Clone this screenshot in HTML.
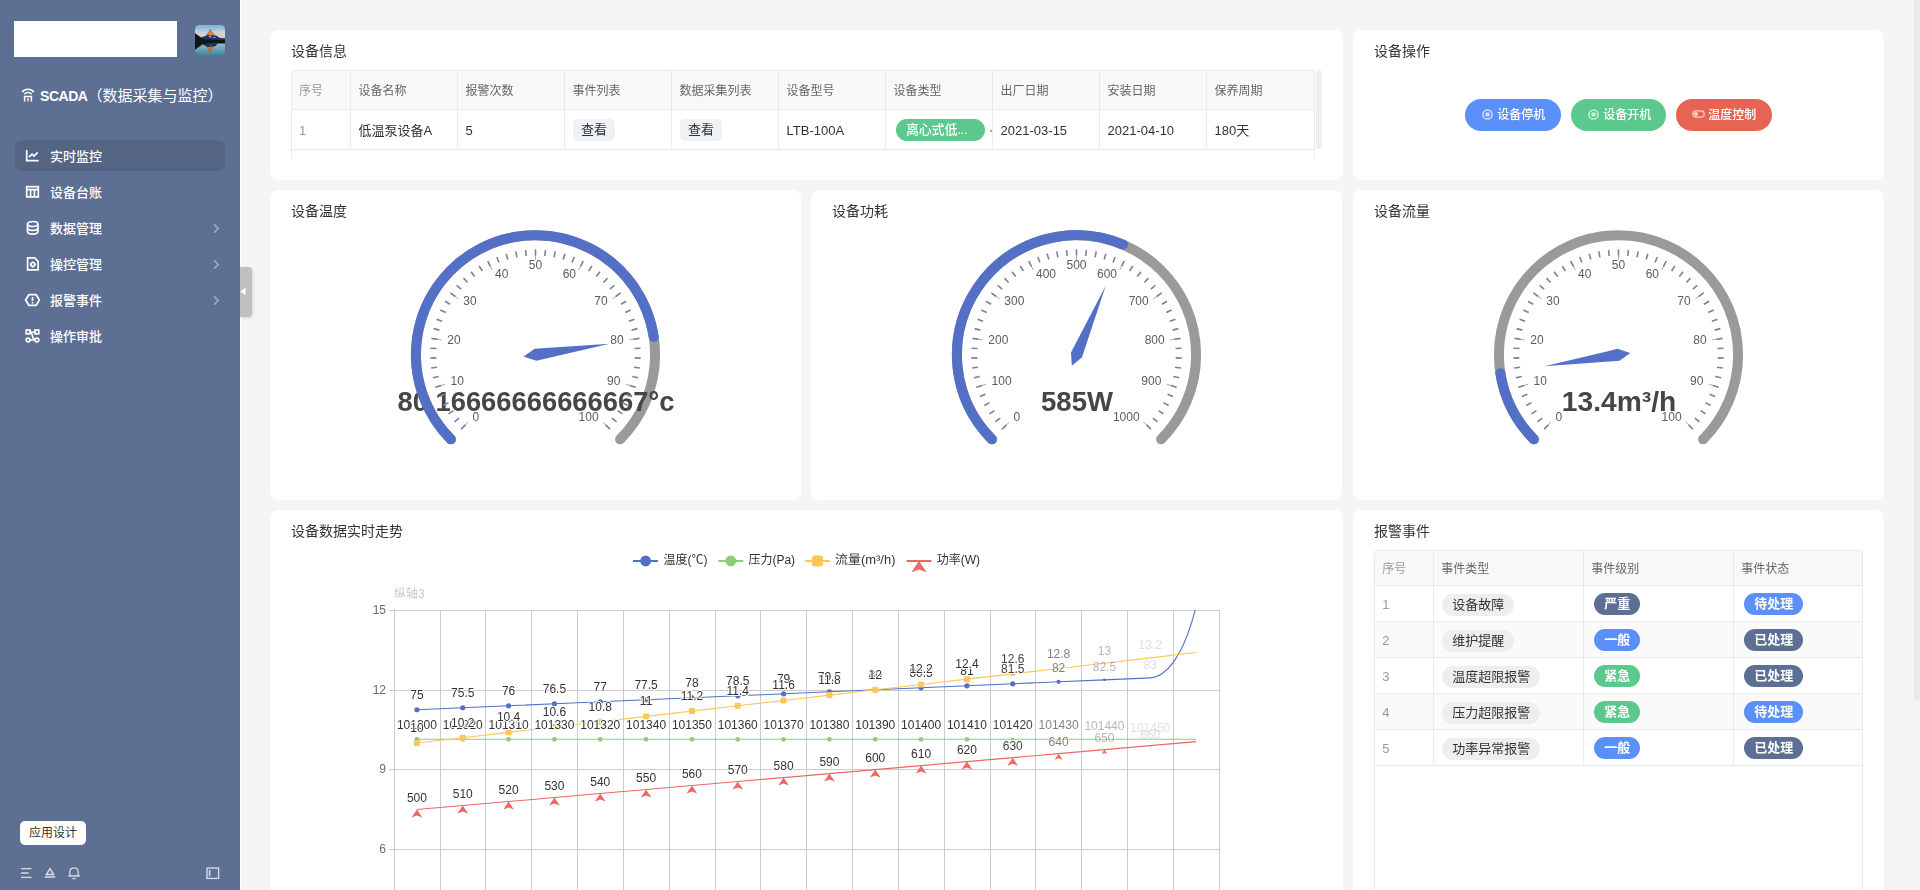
<!DOCTYPE html>
<html lang="zh-CN"><head><meta charset="utf-8"><title>SCADA（数据采集与监控）</title>
<style>
*{box-sizing:border-box;margin:0;padding:0}
html,body{width:1920px;height:890px;overflow:hidden;background:#f5f5f5;font-family:"Liberation Sans","Noto Sans CJK SC",sans-serif;color:#333;font-size:13px}
.abs{position:absolute}
#side{position:absolute;left:0;top:0;width:240px;height:890px;background:#5d6f92}
.card{position:absolute;background:#fff;border-radius:8px;will-change:transform}
.ct{position:absolute;left:21px;top:11px;font-size:14px;line-height:20px;color:#333;white-space:nowrap}
.mi{position:absolute;left:15px;width:210px;height:30px;border-radius:8px}
.mi .tx{position:absolute;left:35px;top:0.7px;line-height:30px;font-size:13px;color:#fff;font-weight:500;white-space:nowrap}
.mi svg{position:absolute}
.cell{position:absolute;white-space:nowrap;overflow:hidden}
.th{font-size:12px;color:#666}
.tag{position:absolute;height:22px;border-radius:11px;line-height:22px;font-size:13px;text-align:center;white-space:nowrap}
.btn{position:absolute;top:69px;height:32px;border-radius:16px;color:#fff;font-size:12px;line-height:32px;white-space:nowrap;font-weight:500}
.ln{position:absolute;background:#e8eaec}
</style></head>
<body>
<div id="side">
<div class="abs" style="left:14px;top:21px;width:163px;height:36px;background:#fff"></div>
<svg class="abs" style="left:195px;top:25px" width="30" height="30" viewBox="0 0 30 30"><defs><clipPath id="av"><rect width="30" height="30" rx="4.5"/></clipPath><linearGradient id="sky" x1="0" y1="0" x2="0" y2="1"><stop offset="0" stop-color="#7eb0da"/><stop offset="0.55" stop-color="#c3d4dc"/><stop offset="1" stop-color="#ecc9b4"/></linearGradient><linearGradient id="lake" x1="0" y1="0" x2="0" y2="1"><stop offset="0" stop-color="#cfc6b4"/><stop offset="0.4" stop-color="#8fb7bb"/><stop offset="1" stop-color="#3b86a6"/></linearGradient><filter id="bl" x="-10%" y="-10%" width="120%" height="120%"><feGaussianBlur stdDeviation="0.45"/></filter></defs><g clip-path="url(#av)"><rect width="30" height="13.5" fill="url(#sky)"/><rect y="13.5" width="30" height="16.5" fill="url(#lake)"/><g filter="url(#bl)"><path d="M5 13 L9 11.5 L11.5 10.2 L15.3 4 L19 9.5 L22 11 L25 13 L30 13.2 V17 H5Z" fill="#1d3960"/><path d="M15.3 4 L18.6 9 L21.8 11 L19 10.6 L17.5 10 L15.5 10.8 L13.2 9.8 L11.2 10.6 L12.6 8.8Z" fill="#e9793f"/><path d="M5.5 11.6 L7.2 11 L8.2 11.7Z" fill="#e59a7c"/><path d="M13 11.8 L15.5 11 L17 12.4 L15 12.2Z M17.5 12.6 L19.5 12 L21 13.2Z" fill="#b9c9dc"/><path d="M0 8.2 C3 10 5.5 12.5 9 14.2 L30 15 V18.6 L22 18.4 L9 19 C6 20.5 3 22.5 0 24.8Z" fill="#08141d"/><path d="M7 19 L23 18.5 L20.5 21 L17.8 21.6 L15.4 28.6 L12.6 22.2 L11 21.2Z" fill="#17304f"/><path d="M11.4 21.5 L13.3 22 L15.3 21.5 L17.3 22.1 L19.4 21.3 L17.2 23.4 L15.4 28.6 L13.4 24.2Z" fill="#d96d36"/><path d="M13.5 19.6 L15.5 20.3 L17.5 19.5 L16 20.8Z" fill="#8aa6c0"/><path d="M5.8 19.6 L8 19.4 L7 20.4Z" fill="#b8866f"/></g></g></svg>
<svg class="abs" style="left:21px;top:87px" width="14" height="15" viewBox="0 0 14 15"><path d="M1.2 5.2 C3.6 1.4 10.4 1.4 12.8 5.2" stroke="#fff" stroke-width="1.5" fill="none"/><path d="M3.4 7.4 C5 5 9 5 10.6 7.4" stroke="#fff" stroke-width="1.5" fill="none"/><path d="M3.6 14.5 V9.4 H10.4 V14.5" stroke="#fff" stroke-width="1.5" fill="none"/><path d="M7 11 V14.5" stroke="#fff" stroke-width="1.3"/></svg>
<div class="abs" style="left:40px;top:85px;height:22px;line-height:22px;font-size:15px;color:#fff;font-weight:400;white-space:nowrap"><b style="font-size:14px;letter-spacing:-0.45px;font-weight:700">SCADA</b>（数据采集与监控）</div>
<div class="abs" style="left:15px;top:140px;width:210px;height:31px;border-radius:8px;background:#546483"></div>
<div class="mi" style="top:141px"><svg style="left:10px;top:8px" width="15" height="14" viewBox="0 0 15 14"><path d="M1.7 1 V11.7 H13.5" stroke="#fff" fill="none" stroke-width="1.7"/><path d="M4 8.2 L7 5.2 L9 7 L12.7 3.3" stroke="#fff" fill="none" stroke-width="1.7" stroke-width="1.4"/></svg><span class="tx">实时监控</span></div>
<div class="mi" style="top:177px"><svg style="left:10px;top:8px" width="15" height="14" viewBox="0 0 15 14"><rect x="1.7" y="1.7" width="11.6" height="10.2" stroke="#fff" fill="none" stroke-width="1.7"/><path d="M1.7 4.6 H13.3" stroke="#fff" fill="none" stroke-width="1.7" stroke-width="1.8"/><path d="M5.6 5 V12 M9.4 5 V12" stroke="#fff" fill="none" stroke-width="1.7"/></svg><span class="tx">设备台账</span></div>
<div class="mi" style="top:213px"><svg style="left:10px;top:7px" width="15" height="16" viewBox="0 0 15 16"><ellipse cx="7.7" cy="4" rx="5.2" ry="2.5" stroke="#fff" fill="none" stroke-width="1.7"/><path d="M2.5 4 V11.6 C2.5 13.2 5 14.2 7.7 14.2 C10.4 14.2 12.9 13.2 12.9 11.6 V4" stroke="#fff" fill="none" stroke-width="1.7"/><path d="M2.5 7.8 C2.5 9.4 5 10.4 7.7 10.4 C10.4 10.4 12.9 9.4 12.9 7.8" stroke="#fff" fill="none" stroke-width="1.7"/></svg><span class="tx">数据管理</span><svg style="left:197px;top:10px" width="8" height="11" viewBox="0 0 8 11"><path d="M2 1.2 L6.2 5.5 L2 9.8" stroke="#a6b1c6" stroke-width="1.5" fill="none"/></svg></div>
<div class="mi" style="top:249px"><svg style="left:10px;top:7px" width="15" height="16" viewBox="0 0 15 16"><path d="M2.6 1.9 H9.6 L13.1 5.4 V13.9 H2.6 Z" stroke="#fff" fill="none" stroke-width="1.7"/><circle cx="7.8" cy="8.4" r="1.9" stroke="#fff" fill="none" stroke-width="1.7" stroke-width="1.6"/><path d="M7.8 5.4v1M7.8 10.4v1M4.8 8.4h1M9.8 8.4h1" stroke="#fff" fill="none" stroke-width="1.7" stroke-width="1.2"/></svg><span class="tx">操控管理</span><svg style="left:197px;top:10px" width="8" height="11" viewBox="0 0 8 11"><path d="M2 1.2 L6.2 5.5 L2 9.8" stroke="#a6b1c6" stroke-width="1.5" fill="none"/></svg></div>
<div class="mi" style="top:285px"><svg style="left:9px;top:8px" width="17" height="14" viewBox="0 0 17 14"><path d="M1.6 7 L4.9 1.7 H12.1 L15.4 7 L12.1 12.3 H4.9 Z" stroke="#fff" fill="none" stroke-width="1.7"/><path d="M8.5 4 V8" stroke="#fff" fill="none" stroke-width="1.7" stroke-width="1.6"/><rect x="7.7" y="9.1" width="1.6" height="1.5" fill="#fff"/></svg><span class="tx">报警事件</span><svg style="left:197px;top:10px" width="8" height="11" viewBox="0 0 8 11"><path d="M2 1.2 L6.2 5.5 L2 9.8" stroke="#a6b1c6" stroke-width="1.5" fill="none"/></svg></div>
<div class="mi" style="top:321px"><svg style="left:10px;top:8px" width="15" height="14" viewBox="0 0 15 14"><path d="M4 3 H10.5 M4 11 H10.5 M4.5 3 C9 3 6 11 10.5 11" stroke="#fff" fill="none" stroke-width="1.7" stroke-width="1.3"/><rect x="1.2" y="1" width="3.8" height="3.8" stroke="#fff" fill="none" stroke-width="1.7" stroke-width="1.4"/><rect x="10" y="1" width="3.8" height="3.8" stroke="#fff" fill="none" stroke-width="1.7" stroke-width="1.4"/><circle cx="3.1" cy="11" r="1.9" stroke="#fff" fill="none" stroke-width="1.7" stroke-width="1.4"/><circle cx="11.9" cy="11" r="1.9" stroke="#fff" fill="none" stroke-width="1.7" stroke-width="1.4"/></svg><span class="tx">操作审批</span></div>
<div class="abs" style="left:20px;top:821px;width:66px;height:24px;border-radius:5px;background:#fff;color:#333;font-size:12px;line-height:24px;text-align:center">应用设计</div>
<svg class="abs" style="left:20px;top:866px" width="14" height="14" viewBox="0 0 14 14"><path d="M1 2.6 H11.4 M1 7 H8.6 M1 11.4 H11.4" stroke="#d5dae4" stroke-width="1.3"/></svg>
<svg class="abs" style="left:43px;top:866px" width="14" height="14" viewBox="0 0 14 14"><path d="M7 2.6 L10.6 8.6 H3.4Z" stroke="#d5dae4" stroke-width="1.5" fill="none"/><path d="M1.8 11 H12.2" stroke="#d5dae4" stroke-width="1.6"/></svg>
<svg class="abs" style="left:66px;top:865px" width="16" height="16" viewBox="0 0 16 16"><path d="M2.2 11 H13.8 M3.8 11 V7 C3.8 1.6 12.2 1.6 12.2 7 V11" stroke="#d5dae4" stroke-width="1.3" fill="none"/><path d="M6.4 13.6 H9.6" stroke="#d5dae4" stroke-width="1.3"/></svg>
<svg class="abs" style="left:206px;top:867px" width="14" height="13" viewBox="0 0 14 13"><rect x="1" y="1" width="11.6" height="10.4" stroke="#d5dae4" stroke-width="1.4" fill="none"/><path d="M3.6 3 V9.4" stroke="#d5dae4" stroke-width="1.6"/></svg>
</div>
<div class="abs" style="left:240px;top:0;width:1px;height:890px;background:#fff"></div>
<div class="abs" style="left:240px;top:267px;width:12px;height:50px;background:#c0c0c0;border-radius:0 4px 4px 0;box-shadow:1px 1px 3px rgba(0,0,0,.12)"></div>
<svg class="abs" style="left:240px;top:287px" width="7" height="9" viewBox="0 0 7 9"><path d="M0.3 4.4 L5.6 0.6 V8.2Z" fill="#fff"/></svg>
<div class="card" style="left:270px;top:30px;width:1072.67px;height:150px"><div class="ct">设备信息</div>
<div class="abs" style="left:21px;top:40px;width:1023px;height:39px;background:#f8f8f9;border-radius:3px 3px 0 0"></div>
<div class="abs" style="left:21px;top:40px;width:1024px;height:88px;border:1px solid #e8eaec;border-bottom:none;border-radius:3px 3px 0 0"></div>
<div class="ln" style="left:21px;top:79px;width:1023px;height:1px"></div>
<div class="ln" style="left:21px;top:119px;width:1023px;height:1px"></div>
<div class="ln" style="left:80px;top:40px;width:1px;height:79px"></div>
<div class="ln" style="left:187px;top:40px;width:1px;height:79px"></div>
<div class="ln" style="left:294px;top:40px;width:1px;height:79px"></div>
<div class="ln" style="left:401px;top:40px;width:1px;height:79px"></div>
<div class="ln" style="left:508px;top:40px;width:1px;height:79px"></div>
<div class="ln" style="left:615px;top:40px;width:1px;height:79px"></div>
<div class="ln" style="left:722px;top:40px;width:1px;height:79px"></div>
<div class="ln" style="left:829px;top:40px;width:1px;height:79px"></div>
<div class="ln" style="left:936px;top:40px;width:1px;height:79px"></div>
<div class="cell th" style="left:29px;top:42px;height:39px;line-height:39px;color:#999">序号</div>
<div class="cell th" style="left:88.6px;top:42px;height:39px;line-height:39px;color:#666">设备名称</div>
<div class="cell th" style="left:195.6px;top:42px;height:39px;line-height:39px;color:#666">报警次数</div>
<div class="cell th" style="left:302.6px;top:42px;height:39px;line-height:39px;color:#666">事件列表</div>
<div class="cell th" style="left:409.6px;top:42px;height:39px;line-height:39px;color:#666">数据采集列表</div>
<div class="cell th" style="left:516.6px;top:42px;height:39px;line-height:39px;color:#666">设备型号</div>
<div class="cell th" style="left:623.6px;top:42px;height:39px;line-height:39px;color:#666">设备类型</div>
<div class="cell th" style="left:730.6px;top:42px;height:39px;line-height:39px;color:#666">出厂日期</div>
<div class="cell th" style="left:837.6px;top:42px;height:39px;line-height:39px;color:#666">安装日期</div>
<div class="cell th" style="left:944.6px;top:42px;height:39px;line-height:39px;color:#666">保养周期</div>
<div class="cell" style="left:29px;top:80.5px;height:40px;line-height:40px;color:#999;font-size:13px">1</div>
<div class="cell" style="left:88.6px;top:80.5px;height:40px;line-height:40px;color:#333;font-size:13px">低温泵设备A</div>
<div class="cell" style="left:195.6px;top:80.5px;height:40px;line-height:40px;color:#333;font-size:13px">5</div>
<div class="tag" style="left:303px;top:89.0px;width:42px;background:#eef1f6;color:#333;border-radius:5px;">查看</div>
<div class="tag" style="left:410px;top:89.0px;width:42px;background:#eef1f6;color:#333;border-radius:5px;">查看</div>
<div class="cell" style="left:516.6px;top:80.5px;height:40px;line-height:40px;color:#333;font-size:13px">LTB-100A</div>
<div class="tag" style="left:626px;top:89.0px;width:89px;background:#5bc88d;color:#fff;font-weight:500;text-align:left;padding-left:10px;letter-spacing:-0.2px;">离心式低...</div>
<div class="cell" style="left:730.6px;top:80.5px;height:40px;line-height:40px;color:#333;font-size:13px">2021-03-15</div>
<div class="cell" style="left:837.6px;top:80.5px;height:40px;line-height:40px;color:#333;font-size:13px">2021-04-10</div>
<div class="cell" style="left:944.6px;top:80.5px;height:40px;line-height:40px;color:#333;font-size:13px">180天</div>
<div class="abs" style="left:719.5px;top:100px;width:2px;height:2px;background:#888;border-radius:1px"></div>
<div class="abs" style="left:1046px;top:40px;width:6px;height:79px;border-radius:3px;background:#eeeff3"></div>
</div>
<div class="card" style="left:1352.67px;top:30px;width:531.33px;height:150px"><div class="ct">设备操作</div>
<div class="btn" style="left:112.3px;width:96px;background:#5b8ff9"><svg style="position:absolute;left:17px;top:9.9px" width="11" height="11" viewBox="0 0 11 11"><circle cx="5.5" cy="5.5" r="4.6" stroke="#fff" stroke-opacity=".7" stroke-width="1.5" fill="none"/><rect x="3.4" y="3.4" width="4.2" height="4.2" rx="1" fill="#fff" fill-opacity=".7"/></svg><span style="position:absolute;left:32px;top:0">设备停机</span></div>
<div class="btn" style="left:218.3px;width:95px;background:#5bc88d"><svg style="position:absolute;left:17px;top:9.9px" width="11" height="11" viewBox="0 0 11 11"><circle cx="5.5" cy="5.5" r="4.6" stroke="#fff" stroke-opacity=".7" stroke-width="1.5" fill="none"/><rect x="3.4" y="3.4" width="4.2" height="4.2" rx="1" fill="#fff" fill-opacity=".7"/></svg><span style="position:absolute;left:32px;top:0">设备开机</span></div>
<div class="btn" style="left:323.3px;width:96px;background:#e86452"><svg style="position:absolute;left:16px;top:11.4px" width="13" height="8" viewBox="0 0 13 8"><rect x="0.8" y="0.8" width="11.4" height="6.4" rx="3.2" stroke="#fff" stroke-opacity=".72" stroke-width="1.2" fill="none"/><circle cx="4" cy="4" r="2" fill="#fff" fill-opacity=".72"/></svg><span style="position:absolute;left:32px;top:0">温度控制</span></div>
</div>
<div class="card" style="left:270px;top:190px;width:531.33px;height:310px"><div class="ct">设备温度</div>
<svg class="abs" style="left:0;top:0;will-change:transform" width="531" height="310" viewBox="0 0 531 310" font-family="Liberation Sans, Noto Sans CJK SC, sans-serif"><path d="M180.93 249.37 A119.6 119.6 0 1 1 350.07 249.37" stroke="#9a9a9a" stroke-width="10" fill="none" stroke-linecap="round"/><text x="127.5" y="221.3" font-size="27" font-weight="bold" fill="#464646" textLength="277" lengthAdjust="spacingAndGlyphs">80.16666666666667°c</text><path d="M191.11 239.19L198.32 231.98M165.45 197.31L175.15 194.16M161.60 148.34L171.67 149.94M180.39 102.96L188.64 108.96M217.74 71.07L222.37 80.15M265.50 59.60L265.50 69.80M313.26 71.07L308.63 80.15M350.61 102.96L342.36 108.96M369.40 148.34L359.33 149.94M365.55 197.31L355.85 194.16M339.89 239.19L332.68 231.98" stroke="#a9abb8" stroke-width="1" fill="none"/><path d="M191.11 239.19L195.36 234.94M184.44 231.86L189.07 228.03M178.49 223.93L183.45 220.56M173.31 215.48L178.57 212.59M168.95 206.58L174.46 204.20M165.45 197.31L171.16 195.45M162.83 187.75L168.69 186.44M161.13 177.99L167.08 177.23M160.35 168.10L166.35 167.92M160.51 158.19L166.50 158.57M161.60 148.34L167.52 149.28M163.61 138.64L169.42 140.13M166.52 129.16L172.16 131.20M170.31 120.01L175.74 122.56M174.95 111.25L180.11 114.30M180.39 102.96L185.25 106.49M186.59 95.23L191.09 99.20M193.49 88.11L197.59 92.49M201.02 81.68L204.70 86.42M209.13 75.98L212.35 81.04M217.74 71.07L220.46 76.41M226.77 66.99L228.98 72.57M236.15 63.78L237.82 69.54M245.79 61.46L246.91 67.36M255.60 60.07L256.16 66.04M265.50 59.60L265.50 65.60M275.40 60.07L274.84 66.04M285.21 61.46L284.09 67.36M294.85 63.78L293.18 69.54M304.23 66.99L302.02 72.57M313.26 71.07L310.54 76.41M321.87 75.98L318.65 81.04M329.98 81.68L326.30 86.42M337.51 88.11L333.41 92.49M344.41 95.23L339.91 99.20M350.61 102.96L345.75 106.49M356.05 111.25L350.89 114.30M360.69 120.01L355.26 122.56M364.48 129.16L358.84 131.20M367.39 138.64L361.58 140.13M369.40 148.34L363.48 149.28M370.49 158.19L364.50 158.57M370.65 168.10L364.65 167.92M369.87 177.99L363.92 177.23M368.17 187.75L362.31 186.44M365.55 197.31L359.84 195.45M362.05 206.58L356.54 204.20M357.69 215.48L352.43 212.59M352.51 223.93L347.55 220.56M346.56 231.86L341.93 228.03M339.89 239.19L335.64 234.94" stroke="#7d8198" stroke-width="1.6" fill="none"/><text x="202.4" y="231.2" font-size="12" fill="#5c5c5c" text-anchor="start">0</text><text x="180.6" y="195.0" font-size="12" fill="#5c5c5c" text-anchor="start">10</text><text x="177.3" y="154.1" font-size="12" fill="#5c5c5c" text-anchor="start">20</text><text x="193.3" y="114.9" font-size="12" fill="#5c5c5c" text-anchor="start">30</text><text x="225.0" y="87.8" font-size="12" fill="#5c5c5c" text-anchor="start">40</text><text x="265.5" y="78.8" font-size="12" fill="#5c5c5c" text-anchor="middle">50</text><text x="306.0" y="87.8" font-size="12" fill="#5c5c5c" text-anchor="end">60</text><text x="337.7" y="114.9" font-size="12" fill="#5c5c5c" text-anchor="end">70</text><text x="353.7" y="154.1" font-size="12" fill="#5c5c5c" text-anchor="end">80</text><text x="350.4" y="195.0" font-size="12" fill="#5c5c5c" text-anchor="end">90</text><text x="328.6" y="231.2" font-size="12" fill="#5c5c5c" text-anchor="end">100</text><polygon points="253.63,166.58 266.39,170.73 339.67,153.65 264.61,158.87" fill="#5470c6"/><path d="M180.93 249.37 A119.6 119.6 0 1 1 383.77 147.02" stroke="#5470c6" stroke-width="10" fill="none" stroke-linecap="round"/></svg>
</div>
<div class="card" style="left:811.33px;top:190px;width:531.33px;height:310px"><div class="ct">设备功耗</div>
<svg class="abs" style="left:0;top:0;will-change:transform" width="531" height="310" viewBox="0 0 531 310" font-family="Liberation Sans, Noto Sans CJK SC, sans-serif"><path d="M180.93 249.37 A119.6 119.6 0 1 1 350.07 249.37" stroke="#9a9a9a" stroke-width="10" fill="none" stroke-linecap="round"/><text x="230.0" y="221.3" font-size="27" font-weight="bold" fill="#464646" textLength="72" lengthAdjust="spacingAndGlyphs">585W</text><path d="M191.11 239.19L198.32 231.98M165.45 197.31L175.15 194.16M161.60 148.34L171.67 149.94M180.39 102.96L188.64 108.96M217.74 71.07L222.37 80.15M265.50 59.60L265.50 69.80M313.26 71.07L308.63 80.15M350.61 102.96L342.36 108.96M369.40 148.34L359.33 149.94M365.55 197.31L355.85 194.16M339.89 239.19L332.68 231.98" stroke="#a9abb8" stroke-width="1" fill="none"/><path d="M191.11 239.19L195.36 234.94M184.44 231.86L189.07 228.03M178.49 223.93L183.45 220.56M173.31 215.48L178.57 212.59M168.95 206.58L174.46 204.20M165.45 197.31L171.16 195.45M162.83 187.75L168.69 186.44M161.13 177.99L167.08 177.23M160.35 168.10L166.35 167.92M160.51 158.19L166.50 158.57M161.60 148.34L167.52 149.28M163.61 138.64L169.42 140.13M166.52 129.16L172.16 131.20M170.31 120.01L175.74 122.56M174.95 111.25L180.11 114.30M180.39 102.96L185.25 106.49M186.59 95.23L191.09 99.20M193.49 88.11L197.59 92.49M201.02 81.68L204.70 86.42M209.13 75.98L212.35 81.04M217.74 71.07L220.46 76.41M226.77 66.99L228.98 72.57M236.15 63.78L237.82 69.54M245.79 61.46L246.91 67.36M255.60 60.07L256.16 66.04M265.50 59.60L265.50 65.60M275.40 60.07L274.84 66.04M285.21 61.46L284.09 67.36M294.85 63.78L293.18 69.54M304.23 66.99L302.02 72.57M313.26 71.07L310.54 76.41M321.87 75.98L318.65 81.04M329.98 81.68L326.30 86.42M337.51 88.11L333.41 92.49M344.41 95.23L339.91 99.20M350.61 102.96L345.75 106.49M356.05 111.25L350.89 114.30M360.69 120.01L355.26 122.56M364.48 129.16L358.84 131.20M367.39 138.64L361.58 140.13M369.40 148.34L363.48 149.28M370.49 158.19L364.50 158.57M370.65 168.10L364.65 167.92M369.87 177.99L363.92 177.23M368.17 187.75L362.31 186.44M365.55 197.31L359.84 195.45M362.05 206.58L356.54 204.20M357.69 215.48L352.43 212.59M352.51 223.93L347.55 220.56M346.56 231.86L341.93 228.03M339.89 239.19L335.64 234.94" stroke="#7d8198" stroke-width="1.6" fill="none"/><text x="202.4" y="231.2" font-size="12" fill="#5c5c5c" text-anchor="start">0</text><text x="180.6" y="195.0" font-size="12" fill="#5c5c5c" text-anchor="start">100</text><text x="177.3" y="154.1" font-size="12" fill="#5c5c5c" text-anchor="start">200</text><text x="193.3" y="114.9" font-size="12" fill="#5c5c5c" text-anchor="start">300</text><text x="225.0" y="87.8" font-size="12" fill="#5c5c5c" text-anchor="start">400</text><text x="265.5" y="78.8" font-size="12" fill="#5c5c5c" text-anchor="middle">500</text><text x="306.0" y="87.8" font-size="12" fill="#5c5c5c" text-anchor="end">600</text><text x="337.7" y="114.9" font-size="12" fill="#5c5c5c" text-anchor="end">700</text><text x="353.7" y="154.1" font-size="12" fill="#5c5c5c" text-anchor="end">800</text><text x="350.4" y="195.0" font-size="12" fill="#5c5c5c" text-anchor="end">900</text><text x="328.6" y="231.2" font-size="12" fill="#5c5c5c" text-anchor="end">1000</text><polygon points="260.82,175.85 271.03,167.14 294.74,95.74 259.97,162.46" fill="#5470c6"/><path d="M180.93 249.37 A119.6 119.6 0 0 1 312.14 54.67" stroke="#5470c6" stroke-width="10" fill="none" stroke-linecap="round"/></svg>
</div>
<div class="card" style="left:1352.67px;top:190px;width:531.33px;height:310px"><div class="ct">设备流量</div>
<svg class="abs" style="left:0;top:0;will-change:transform" width="531" height="310" viewBox="0 0 531 310" font-family="Liberation Sans, Noto Sans CJK SC, sans-serif"><path d="M180.93 249.37 A119.6 119.6 0 1 1 350.07 249.37" stroke="#9a9a9a" stroke-width="10" fill="none" stroke-linecap="round"/><text x="208.8" y="221.3" font-size="27" font-weight="bold" fill="#464646" textLength="114.5" lengthAdjust="spacingAndGlyphs">13.4m³/h</text><path d="M191.11 239.19L198.32 231.98M165.45 197.31L175.15 194.16M161.60 148.34L171.67 149.94M180.39 102.96L188.64 108.96M217.74 71.07L222.37 80.15M265.50 59.60L265.50 69.80M313.26 71.07L308.63 80.15M350.61 102.96L342.36 108.96M369.40 148.34L359.33 149.94M365.55 197.31L355.85 194.16M339.89 239.19L332.68 231.98" stroke="#a9abb8" stroke-width="1" fill="none"/><path d="M191.11 239.19L195.36 234.94M184.44 231.86L189.07 228.03M178.49 223.93L183.45 220.56M173.31 215.48L178.57 212.59M168.95 206.58L174.46 204.20M165.45 197.31L171.16 195.45M162.83 187.75L168.69 186.44M161.13 177.99L167.08 177.23M160.35 168.10L166.35 167.92M160.51 158.19L166.50 158.57M161.60 148.34L167.52 149.28M163.61 138.64L169.42 140.13M166.52 129.16L172.16 131.20M170.31 120.01L175.74 122.56M174.95 111.25L180.11 114.30M180.39 102.96L185.25 106.49M186.59 95.23L191.09 99.20M193.49 88.11L197.59 92.49M201.02 81.68L204.70 86.42M209.13 75.98L212.35 81.04M217.74 71.07L220.46 76.41M226.77 66.99L228.98 72.57M236.15 63.78L237.82 69.54M245.79 61.46L246.91 67.36M255.60 60.07L256.16 66.04M265.50 59.60L265.50 65.60M275.40 60.07L274.84 66.04M285.21 61.46L284.09 67.36M294.85 63.78L293.18 69.54M304.23 66.99L302.02 72.57M313.26 71.07L310.54 76.41M321.87 75.98L318.65 81.04M329.98 81.68L326.30 86.42M337.51 88.11L333.41 92.49M344.41 95.23L339.91 99.20M350.61 102.96L345.75 106.49M356.05 111.25L350.89 114.30M360.69 120.01L355.26 122.56M364.48 129.16L358.84 131.20M367.39 138.64L361.58 140.13M369.40 148.34L363.48 149.28M370.49 158.19L364.50 158.57M370.65 168.10L364.65 167.92M369.87 177.99L363.92 177.23M368.17 187.75L362.31 186.44M365.55 197.31L359.84 195.45M362.05 206.58L356.54 204.20M357.69 215.48L352.43 212.59M352.51 223.93L347.55 220.56M346.56 231.86L341.93 228.03M339.89 239.19L335.64 234.94" stroke="#7d8198" stroke-width="1.6" fill="none"/><text x="202.4" y="231.2" font-size="12" fill="#5c5c5c" text-anchor="start">0</text><text x="180.6" y="195.0" font-size="12" fill="#5c5c5c" text-anchor="start">10</text><text x="177.3" y="154.1" font-size="12" fill="#5c5c5c" text-anchor="start">20</text><text x="193.3" y="114.9" font-size="12" fill="#5c5c5c" text-anchor="start">30</text><text x="225.0" y="87.8" font-size="12" fill="#5c5c5c" text-anchor="start">40</text><text x="265.5" y="78.8" font-size="12" fill="#5c5c5c" text-anchor="middle">50</text><text x="306.0" y="87.8" font-size="12" fill="#5c5c5c" text-anchor="end">60</text><text x="337.7" y="114.9" font-size="12" fill="#5c5c5c" text-anchor="end">70</text><text x="353.7" y="154.1" font-size="12" fill="#5c5c5c" text-anchor="end">80</text><text x="350.4" y="195.0" font-size="12" fill="#5c5c5c" text-anchor="end">90</text><text x="328.6" y="231.2" font-size="12" fill="#5c5c5c" text-anchor="end">100</text><polygon points="277.36,162.96 264.58,158.87 191.39,176.30 266.42,170.73" fill="#5470c6"/><path d="M180.93 249.37 A119.6 119.6 0 0 1 147.31 183.14" stroke="#5470c6" stroke-width="10" fill="none" stroke-linecap="round"/></svg>
</div>
<div class="card" style="left:270px;top:510px;width:1072.67px;height:400px"><div class="ct">设备数据实时走势</div>
<svg class="abs" style="left:0;top:0;will-change:transform" width="1072" height="380" viewBox="270 510 1072 380" font-family="Liberation Sans, Noto Sans CJK SC, sans-serif" font-size="12"><path d="M633 561H658" stroke="#5470c6" stroke-width="2"/><circle cx="645.6" cy="561" r="5.4" fill="#5470c6"/><text x="663.5" y="564.2" fill="#333">温度(℃)</text><path d="M718.4 561H743.2" stroke="#91cc75" stroke-width="2"/><circle cx="730.8" cy="561" r="5.4" fill="#91cc75"/><text x="748.4" y="564.2" fill="#333">压力(Pa)</text><path d="M805 561H830" stroke="#fac858" stroke-width="2"/><rect x="812" y="555.5" width="11" height="11" rx="2.5" fill="#fac858"/><text x="835" y="564.2" fill="#333" textLength="60.5" lengthAdjust="spacingAndGlyphs">流量(m³/h)</text><path d="M906.5 561H931.5" stroke="#ee6666" stroke-width="2"/><path d="M919 561 L926.6 572.2 L919 569.4 L911.4 572.2Z" fill="#ee6666"/><text x="936.8" y="564.2" fill="#333">功率(W)</text><text x="394" y="598.4" fill="#c9c9c9">纵轴3</text><text x="386" y="613.8" fill="#6a6a6a" text-anchor="end">15</text><text x="386" y="693.6" fill="#6a6a6a" text-anchor="end">12</text><text x="386" y="773.4" fill="#6a6a6a" text-anchor="end">9</text><text x="386" y="853.2" fill="#6a6a6a" text-anchor="end">6</text><path d="M394.5 609.0V900M440.5 610.0V900M485.5 610.0V900M531.5 610.0V900M577.5 610.0V900M623.5 610.0V900M669.5 610.0V900M715.5 610.0V900M760.5 610.0V900M806.5 610.0V900M852.5 610.0V900M898.5 610.0V900M944.5 610.0V900M990.5 610.0V900M1035.5 610.0V900M1081.5 610.0V900M1127.5 610.0V900M1173.5 610.0V900M1219.5 610.0V900M389.0 610.5H1220.0M389.0 690.5H1220.0M389.0 769.5H1220.0M389.0 849.5H1220.0" stroke="#cccccc" stroke-width="1" fill="none"/><clipPath id="gc"><rect x="394" y="610" width="826" height="300"/></clipPath><g clip-path="url(#gc)"><path d="M416.92 709.75 L462.75 707.75 L508.58 705.76 L554.42 703.76 L600.25 701.77 L646.08 699.77 L691.92 697.78 L737.75 695.78 L783.58 693.79 L829.42 691.79 L875.25 689.80 L921.08 687.81 L966.92 685.81 L1012.75 683.82 L1058.58 681.82 L1104.42 679.83 L1150.25 677.83 C1165.7 677 1183.5 657.3 1196.08 606.3" stroke="#5470c6" stroke-width="1.1" fill="none"/><path d="M416.92 739.30 L462.75 739.30 L508.58 739.30 L554.42 739.30 L600.25 739.30 L646.08 739.30 L691.92 739.30 L737.75 739.30 L783.58 739.30 L829.42 739.30 L875.25 739.30 L921.08 739.30 L966.92 739.30 L1012.75 739.30 L1058.58 739.30 L1104.42 739.30 L1150.25 739.30 L1196.08 739.3" stroke="#91cc75" stroke-width="1.1" fill="none"/><path d="M416.92 743.00 L462.75 737.68 L508.58 732.36 L554.42 727.04 L600.25 721.72 L646.08 716.40 L691.92 711.08 L737.75 705.76 L783.58 700.44 L829.42 695.12 L875.25 689.80 L921.08 684.48 L966.92 679.16 L1012.75 673.84 L1058.58 668.52 L1104.42 663.20 L1150.25 657.88 L1196.08 652.56" stroke="#fac858" stroke-width="1.1" fill="none"/><path d="M416.92 809.50 L462.75 805.51 L508.58 801.52 L554.42 797.53 L600.25 793.54 L646.08 789.55 L691.92 785.56 L737.75 781.57 L783.58 777.58 L829.42 773.59 L875.25 769.60 L921.08 765.61 L966.92 761.62 L1012.75 757.63 L1058.58 753.64 L1104.42 749.65 L1150.25 745.66 L1196.08 741.67" stroke="#ee6666" stroke-width="1.1" fill="none"/></g><circle cx="416.92" cy="709.75" r="2.60" fill="#5470c6"/><circle cx="462.75" cy="707.75" r="2.60" fill="#5470c6"/><circle cx="508.58" cy="705.76" r="2.60" fill="#5470c6"/><circle cx="554.42" cy="703.76" r="2.60" fill="#5470c6"/><circle cx="600.25" cy="701.77" r="2.60" fill="#5470c6"/><circle cx="646.08" cy="699.77" r="2.60" fill="#5470c6"/><circle cx="691.92" cy="697.78" r="2.60" fill="#5470c6"/><circle cx="737.75" cy="695.78" r="2.60" fill="#5470c6"/><circle cx="783.58" cy="693.79" r="2.60" fill="#5470c6"/><circle cx="829.42" cy="691.79" r="2.60" fill="#5470c6"/><circle cx="875.25" cy="689.80" r="2.60" fill="#5470c6"/><circle cx="921.08" cy="687.81" r="2.60" fill="#5470c6"/><circle cx="966.92" cy="685.81" r="2.60" fill="#5470c6"/><circle cx="1012.75" cy="683.82" r="2.60" fill="#5470c6"/><circle cx="1058.58" cy="681.82" r="2.08" fill="#5470c6"/><circle cx="1104.42" cy="679.83" r="1.30" fill="#5470c6"/><circle cx="416.92" cy="739.30" r="2.40" fill="#91cc75"/><circle cx="462.75" cy="739.30" r="2.40" fill="#91cc75"/><circle cx="508.58" cy="739.30" r="2.40" fill="#91cc75"/><circle cx="554.42" cy="739.30" r="2.40" fill="#91cc75"/><circle cx="600.25" cy="739.30" r="2.40" fill="#91cc75"/><circle cx="646.08" cy="739.30" r="2.40" fill="#91cc75"/><circle cx="691.92" cy="739.30" r="2.40" fill="#91cc75"/><circle cx="737.75" cy="739.30" r="2.40" fill="#91cc75"/><circle cx="783.58" cy="739.30" r="2.40" fill="#91cc75"/><circle cx="829.42" cy="739.30" r="2.40" fill="#91cc75"/><circle cx="875.25" cy="739.30" r="2.40" fill="#91cc75"/><circle cx="921.08" cy="739.30" r="2.40" fill="#91cc75"/><circle cx="966.92" cy="739.30" r="2.40" fill="#91cc75"/><circle cx="1012.75" cy="739.30" r="1.68" fill="#91cc75"/><rect x="413.92" y="740.00" width="6.00" height="6.00" rx="1.20" fill="#fac858"/><rect x="459.75" y="734.68" width="6.00" height="6.00" rx="1.20" fill="#fac858"/><rect x="505.58" y="729.36" width="6.00" height="6.00" rx="1.20" fill="#fac858"/><rect x="551.42" y="724.04" width="6.00" height="6.00" rx="1.20" fill="#fac858"/><rect x="597.25" y="718.72" width="6.00" height="6.00" rx="1.20" fill="#fac858"/><rect x="643.08" y="713.40" width="6.00" height="6.00" rx="1.20" fill="#fac858"/><rect x="688.92" y="708.08" width="6.00" height="6.00" rx="1.20" fill="#fac858"/><rect x="734.75" y="702.76" width="6.00" height="6.00" rx="1.20" fill="#fac858"/><rect x="780.58" y="697.44" width="6.00" height="6.00" rx="1.20" fill="#fac858"/><rect x="826.42" y="692.12" width="6.00" height="6.00" rx="1.20" fill="#fac858"/><rect x="872.25" y="686.80" width="6.00" height="6.00" rx="1.20" fill="#fac858"/><rect x="918.08" y="681.48" width="6.00" height="6.00" rx="1.20" fill="#fac858"/><rect x="963.92" y="676.16" width="6.00" height="6.00" rx="1.20" fill="#fac858"/><rect x="1010.65" y="671.74" width="4.20" height="4.20" rx="0.84" fill="#fac858"/><rect x="1057.53" y="667.47" width="2.10" height="2.10" rx="0.42" fill="#fac858"/><rect x="1103.76" y="662.54" width="1.32" height="1.32" rx="0.26" fill="#fac858"/><path d="M416.92 809.50L422.22 817.50L416.92 815.50L411.62 817.50Z" fill="#ee6666"/><path d="M462.75 805.51L468.05 813.51L462.75 811.51L457.45 813.51Z" fill="#ee6666"/><path d="M508.58 801.52L513.88 809.52L508.58 807.52L503.28 809.52Z" fill="#ee6666"/><path d="M554.42 797.53L559.72 805.53L554.42 803.53L549.12 805.53Z" fill="#ee6666"/><path d="M600.25 793.54L605.55 801.54L600.25 799.54L594.95 801.54Z" fill="#ee6666"/><path d="M646.08 789.55L651.38 797.55L646.08 795.55L640.78 797.55Z" fill="#ee6666"/><path d="M691.92 785.56L697.22 793.56L691.92 791.56L686.62 793.56Z" fill="#ee6666"/><path d="M737.75 781.57L743.05 789.57L737.75 787.57L732.45 789.57Z" fill="#ee6666"/><path d="M783.58 777.58L788.88 785.58L783.58 783.58L778.28 785.58Z" fill="#ee6666"/><path d="M829.42 773.59L834.72 781.59L829.42 779.59L824.12 781.59Z" fill="#ee6666"/><path d="M875.25 769.60L880.55 777.60L875.25 775.60L869.95 777.60Z" fill="#ee6666"/><path d="M921.08 765.61L926.38 773.61L921.08 771.61L915.78 773.61Z" fill="#ee6666"/><path d="M966.92 761.62L972.22 769.62L966.92 767.62L961.62 769.62Z" fill="#ee6666"/><path d="M1012.75 757.63L1018.05 765.63L1012.75 763.63L1007.45 765.63Z" fill="#ee6666"/><path d="M1058.58 753.64L1062.56 759.64L1058.58 758.14L1054.61 759.64Z" fill="#ee6666"/><path d="M1104.42 749.65L1107.33 754.05L1104.42 752.95L1101.50 754.05Z" fill="#ee6666"/><path d="M1150.25 745.66L1151.31 747.26L1150.25 746.86L1149.19 747.26Z" fill="#ee6666"/><g fill="#333" text-anchor="middle" stroke="#fff" stroke-width="2" paint-order="stroke" stroke-linejoin="round"><text x="416.92" y="699.15" opacity="1">75</text><text x="462.75" y="697.15" opacity="1">75.5</text><text x="508.58" y="695.16" opacity="1">76</text><text x="554.42" y="693.16" opacity="1">76.5</text><text x="600.25" y="691.17" opacity="1">77</text><text x="646.08" y="689.17" opacity="1">77.5</text><text x="691.92" y="687.18" opacity="1">78</text><text x="737.75" y="685.18" opacity="1">78.5</text><text x="783.58" y="683.19" opacity="1">79</text><text x="829.42" y="681.19" opacity="1">79.5</text><text x="875.25" y="679.20" opacity="1">80</text><text x="921.08" y="677.21" opacity="1">80.5</text><text x="966.92" y="675.21" opacity="1">81</text><text x="1012.75" y="673.22" opacity="0.92">81.5</text><text x="1058.58" y="672.02" opacity="0.62">82</text><text x="1104.42" y="671.23" opacity="0.36">82.5</text><text x="1150.25" y="669.43" opacity="0.16">83</text></g><g fill="#333" text-anchor="middle" stroke="#fff" stroke-width="2" paint-order="stroke" stroke-linejoin="round"><text x="416.92" y="729.20" opacity="1">101300</text><text x="462.75" y="729.20" opacity="1">101320</text><text x="508.58" y="729.20" opacity="1">101310</text><text x="554.42" y="729.20" opacity="1">101330</text><text x="600.25" y="729.20" opacity="1">101320</text><text x="646.08" y="729.20" opacity="1">101340</text><text x="691.92" y="729.20" opacity="1">101350</text><text x="737.75" y="729.20" opacity="1">101360</text><text x="783.58" y="729.20" opacity="1">101370</text><text x="829.42" y="729.20" opacity="1">101380</text><text x="875.25" y="729.20" opacity="1">101390</text><text x="921.08" y="729.20" opacity="1">101400</text><text x="966.92" y="729.20" opacity="1">101410</text><text x="1012.75" y="729.20" opacity="0.92">101420</text><text x="1058.58" y="729.20" opacity="0.62">101430</text><text x="1104.42" y="730.00" opacity="0.36">101440</text><text x="1150.25" y="731.60" opacity="0.16">101450</text></g><g fill="#333" text-anchor="middle" stroke="#fff" stroke-width="2" paint-order="stroke" stroke-linejoin="round"><text x="416.92" y="732.00" opacity="1">10</text><text x="462.75" y="726.68" opacity="1">10.2</text><text x="508.58" y="721.36" opacity="1">10.4</text><text x="554.42" y="716.04" opacity="1">10.6</text><text x="600.25" y="710.72" opacity="1">10.8</text><text x="646.08" y="705.40" opacity="1">11</text><text x="691.92" y="700.08" opacity="1">11.2</text><text x="737.75" y="694.76" opacity="1">11.4</text><text x="783.58" y="689.44" opacity="1">11.6</text><text x="829.42" y="684.12" opacity="1">11.8</text><text x="875.25" y="678.80" opacity="1">12</text><text x="921.08" y="673.48" opacity="1">12.2</text><text x="966.92" y="668.16" opacity="1">12.4</text><text x="1012.75" y="662.84" opacity="0.92">12.6</text><text x="1058.58" y="657.52" opacity="0.62">12.8</text><text x="1104.42" y="654.50" opacity="0.36">13</text><text x="1150.25" y="649.38" opacity="0.16">13.2</text></g><g fill="#333" text-anchor="middle" stroke="#fff" stroke-width="2" paint-order="stroke" stroke-linejoin="round"><text x="416.92" y="802.00" opacity="1">500</text><text x="462.75" y="798.01" opacity="1">510</text><text x="508.58" y="794.02" opacity="1">520</text><text x="554.42" y="790.03" opacity="1">530</text><text x="600.25" y="786.04" opacity="1">540</text><text x="646.08" y="782.05" opacity="1">550</text><text x="691.92" y="778.06" opacity="1">560</text><text x="737.75" y="774.07" opacity="1">570</text><text x="783.58" y="770.08" opacity="1">580</text><text x="829.42" y="766.09" opacity="1">590</text><text x="875.25" y="762.10" opacity="1">600</text><text x="921.08" y="758.11" opacity="1">610</text><text x="966.92" y="754.12" opacity="1">620</text><text x="1012.75" y="750.13" opacity="0.92">630</text><text x="1058.58" y="746.14" opacity="0.62">640</text><text x="1104.42" y="742.15" opacity="0.36">650</text><text x="1150.25" y="739.46" opacity="0.16">660</text></g></svg>
</div>
<div class="card" style="left:1352.67px;top:510px;width:531.33px;height:400px"><div class="ct">报警事件</div>
<div class="abs" style="left:21.33px;top:40px;width:488.0px;height:35px;background:#f8f8f9;border-radius:4px 4px 0 0"></div>
<div class="abs" style="left:21.33px;top:111px;width:488.0px;height:36px;background:#fafafa"></div>
<div class="abs" style="left:21.33px;top:183px;width:488.0px;height:36px;background:#fafafa"></div>
<div class="abs" style="left:21.33px;top:40px;width:489.0px;height:415px;border:1px solid #e8eaec;border-bottom:none;border-radius:4px 4px 0 0"></div>
<div class="ln" style="left:21.33px;top:75px;width:488.0px;height:1px"></div>
<div class="ln" style="left:21.33px;top:111px;width:488.0px;height:1px"></div>
<div class="ln" style="left:21.33px;top:147px;width:488.0px;height:1px"></div>
<div class="ln" style="left:21.33px;top:183px;width:488.0px;height:1px"></div>
<div class="ln" style="left:21.33px;top:219px;width:488.0px;height:1px"></div>
<div class="ln" style="left:21.33px;top:255px;width:488.0px;height:1px"></div>
<div class="ln" style="left:80.33px;top:40px;width:1px;height:215px"></div>
<div class="ln" style="left:230.33px;top:40px;width:1px;height:215px"></div>
<div class="ln" style="left:380.33px;top:40px;width:1px;height:215px"></div>
<div class="cell th" style="left:29.33px;top:42px;height:35px;line-height:35px;color:#999">序号</div>
<div class="cell th" style="left:88.33px;top:42px;height:35px;line-height:35px;color:#666">事件类型</div>
<div class="cell th" style="left:238.33px;top:42px;height:35px;line-height:35px;color:#666">事件级别</div>
<div class="cell th" style="left:388.33px;top:42px;height:35px;line-height:35px;color:#666">事件状态</div>
<div class="cell" style="left:29.33px;top:76.5px;height:36px;line-height:36px;color:#999;font-size:13px">1</div>
<div class="tag" style="left:89.33px;top:84.0px;width:72px;background:#eeeeee;color:#333;">设备故障</div>
<div class="tag" style="left:241.33px;top:84.0px;width:46px;background:#5d6f92;color:#fff;font-weight:700;margin-top:-1px;">严重</div>
<div class="tag" style="left:391.33px;top:84.0px;width:59px;background:#5b8ff9;color:#fff;font-weight:700;margin-top:-1px;">待处理</div>
<div class="cell" style="left:29.33px;top:112.5px;height:36px;line-height:36px;color:#999;font-size:13px">2</div>
<div class="tag" style="left:89.33px;top:120.0px;width:72px;background:#eeeeee;color:#333;">维护提醒</div>
<div class="tag" style="left:241.33px;top:120.0px;width:46px;background:#5b8ff9;color:#fff;font-weight:700;margin-top:-1px;">一般</div>
<div class="tag" style="left:391.33px;top:120.0px;width:59px;background:#5d6f92;color:#fff;font-weight:700;margin-top:-1px;">已处理</div>
<div class="cell" style="left:29.33px;top:148.5px;height:36px;line-height:36px;color:#999;font-size:13px">3</div>
<div class="tag" style="left:89.33px;top:156.0px;width:98px;background:#eeeeee;color:#333;">温度超限报警</div>
<div class="tag" style="left:241.33px;top:156.0px;width:46px;background:#5bc88d;color:#fff;font-weight:700;margin-top:-1px;">紧急</div>
<div class="tag" style="left:391.33px;top:156.0px;width:59px;background:#5d6f92;color:#fff;font-weight:700;margin-top:-1px;">已处理</div>
<div class="cell" style="left:29.33px;top:184.5px;height:36px;line-height:36px;color:#999;font-size:13px">4</div>
<div class="tag" style="left:89.33px;top:192.0px;width:98px;background:#eeeeee;color:#333;">压力超限报警</div>
<div class="tag" style="left:241.33px;top:192.0px;width:46px;background:#5bc88d;color:#fff;font-weight:700;margin-top:-1px;">紧急</div>
<div class="tag" style="left:391.33px;top:192.0px;width:59px;background:#5b8ff9;color:#fff;font-weight:700;margin-top:-1px;">待处理</div>
<div class="cell" style="left:29.33px;top:220.5px;height:36px;line-height:36px;color:#999;font-size:13px">5</div>
<div class="tag" style="left:89.33px;top:228.0px;width:98px;background:#eeeeee;color:#333;">功率异常报警</div>
<div class="tag" style="left:241.33px;top:228.0px;width:46px;background:#5b8ff9;color:#fff;font-weight:700;margin-top:-1px;">一般</div>
<div class="tag" style="left:391.33px;top:228.0px;width:59px;background:#5d6f92;color:#fff;font-weight:700;margin-top:-1px;">已处理</div>
</div>
<div class="abs" style="left:1914px;top:-3px;width:6px;height:704px;border-radius:3px;background:#e8e9ed"></div>
</body></html>
